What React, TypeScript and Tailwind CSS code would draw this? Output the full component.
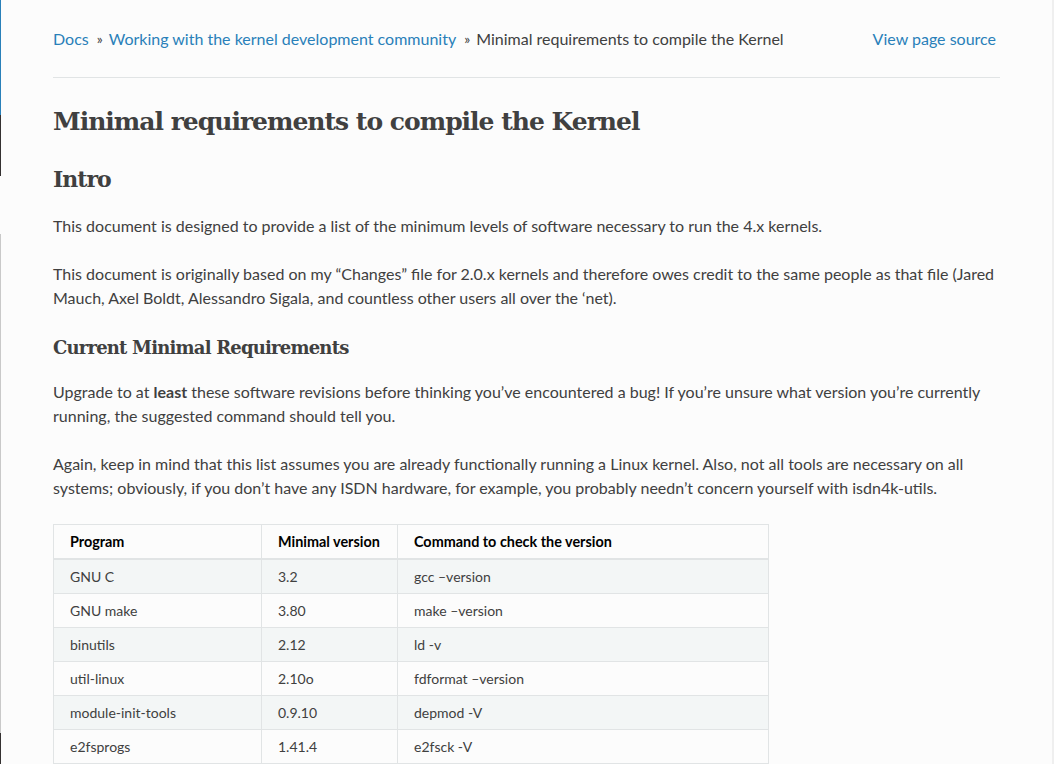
import React from "react";

const rows: [string, string, string][] = [
  ["GNU C", "3.2", "gcc \u2013version"],
  ["GNU make", "3.80", "make \u2013version"],
  ["binutils", "2.12", "ld -v"],
  ["util-linux", "2.10o", "fdformat \u2013version"],
  ["module-init-tools", "0.9.10", "depmod -V"],
  ["e2fsprogs", "1.41.4", "e2fsck -V"],
];

const slab = { fontFamily: '"Roboto Slab", "DejaVu Serif", serif' };

export default function App() {
  return (
    <div
      className="flex h-[764px] w-full overflow-hidden bg-[#fcfcfc] text-[#404040]"
      style={{ fontFamily: 'Lato, "Noto Sans", sans-serif' }}
    >
      <div className="flex w-px shrink-0 flex-col">
        <div className="h-[115px] bg-[#2980b9]" />
        <div className="h-[61px] bg-[#343131]" />
        <div className="h-[58px] bg-[#fcfcfc]" />
        <div className="h-[499px] bg-[#c9c9c9]" />
        <div className="flex-1 bg-[#343131]" />
      </div>
      <div className="flex-1 pl-[52px] pr-[52px]">
        <div className="flex items-center justify-between pt-[27px] text-[16px] leading-[24px]">
          <div className="flex items-center">
            <a className="text-[#2980b9]">Docs</a>
            <span className="pl-[8px] pr-[6px] text-[14px]">»</span>
            <a className="text-[#2980b9]">Working with the kernel development community</a>
            <span className="pl-[8px] pr-[6px] text-[14px]">»</span>
            <span>Minimal requirements to compile the Kernel</span>
          </div>
          <a className="pr-[4px] text-[#2980b9]">View page source</a>
        </div>
        <div className="mt-[26px] h-px bg-[#e1e4e5]" />
        <h1
          className="mt-[27px] text-[25px] font-bold leading-[34px] tracking-[-1px]"
          style={slab}
        >
          Minimal requirements to compile the Kernel
        </h1>
        <h2
          className="mt-[26px] text-[22px] font-bold leading-[29px] tracking-[-1px]"
          style={slab}
        >
          Intro
        </h2>
        <p className="mt-[20px] text-[16px] leading-[24px]">
          This document is designed to provide a list of the minimum levels of software
          necessary to run the 4.x kernels.
        </p>
        <p className="mt-[24px] text-[16px] leading-[24px]">
          This document is originally based on my “Changes” file for 2.0.x kernels and
          therefore owes credit to the same people as that file (Jared Mauch, Axel Boldt,
          Alessandro Sigala, and countless other users all over the ‘net).
        </p>
        <h3
          className="mt-[26px] text-[18px] font-bold leading-[24px] tracking-[-0.8px]"
          style={slab}
        >
          Current Minimal Requirements
        </h3>
        <p className="mt-[20px] text-[16px] leading-[24px]">
          Upgrade to at <b>least</b> these software revisions before thinking you’ve
          encountered a bug! If you’re unsure what version you’re currently running, the
          suggested command should tell you.
        </p>
        <p className="mt-[24px] text-[16px] leading-[24px]">
          Again, keep in mind that this list assumes you are already functionally running a
          Linux kernel. Also, not all tools are necessary on all systems; obviously, if you
          don’t have any ISDN hardware, for example, you probably needn’t concern yourself
          with isdn4k-utils.
        </p>
        <table className="mt-[24px] border-collapse border border-[#e1e4e5] text-[14px] leading-[17px]">
          <thead>
            <tr className="border-b-2 border-[#e1e4e5]">
              <th className="w-[208px] border border-[#e1e4e5] px-[16px] py-[8px] text-left text-[14.4px] font-bold text-black">
                Program
              </th>
              <th className="w-[136px] border border-[#e1e4e5] px-[16px] py-[8px] text-left text-[14.4px] font-bold text-black">
                Minimal version
              </th>
              <th className="w-[371px] border border-[#e1e4e5] px-[16px] py-[8px] text-left text-[14.4px] font-bold text-black">
                Command to check the version
              </th>
            </tr>
          </thead>
          <tbody>
            {rows.map((r, i) => (
              <tr key={r[0]} className={i % 2 === 0 ? "bg-[#f3f6f6]" : "bg-[#fcfcfc]"}>
                {r.map((c, j) => (
                  <td key={j} className="border border-[#e1e4e5] px-[16px] py-[8px]">
                    {c}
                  </td>
                ))}
              </tr>
            ))}
          </tbody>
        </table>
      </div>
      <div className="w-[2px] shrink-0 bg-[#efefef]" />
    </div>
  );
}
